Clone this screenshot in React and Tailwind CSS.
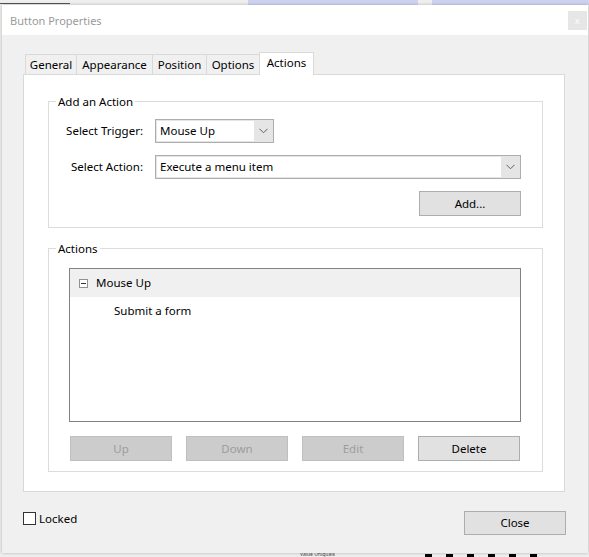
import React from "react";

const font = { fontFamily: '"Noto Sans", "Open Sans", sans-serif' };

function Combo({ width, inner, text }) {
  return (
    <div className={`flex h-[24px] border border-[#adadad] bg-[#e5e5e5] ${width}`}>
      <div className={`my-[1px] ml-[1px] flex items-center bg-white pl-[3px] ${inner}`}>{text}</div>
      <div className="flex flex-1 items-center justify-center">
        <svg width="9" height="6" viewBox="0 0 9 6">
          <path d="M0.5 0.8 L4.5 4.8 L8.5 0.8" fill="none" stroke="#606060" strokeWidth="1" />
        </svg>
      </div>
    </div>
  );
}

function Btn({ children, disabled }) {
  return disabled ? (
    <div className="flex h-[25px] w-[102px] items-center justify-center border border-[#bfbfbf] bg-[#cccccc] text-[#9d9d9d]">
      {children}
    </div>
  ) : (
    <div className="flex h-[25px] w-[102px] items-center justify-center border border-[#adadad] bg-[#e1e1e1] text-black">
      {children}
    </div>
  );
}

export default function App() {
  return (
    <div className="relative h-[557px] w-[589px] overflow-hidden bg-[#eeeeee] text-[11.5px] leading-none text-black" style={font}>
      {/* desktop behind */}
      <div className="absolute left-[248px] top-0 h-[5px] w-[170px] bg-[#cdd2f0]" />
      <div className="absolute left-[432px] top-0 h-[5px] w-[157px] bg-[#cdd2f0]" />
      <div className="absolute left-[0px] top-[3px] h-[1px] w-[70px] bg-[#555]" />
      <div className="absolute left-[300px] top-[552px] text-[5px] leading-none text-[#444]">Value Uniquals</div>
      <div className="absolute left-[425px] top-[554px] flex gap-[14px]">
        <div className="h-[3px] w-[7px] bg-black" />
        <div className="h-[3px] w-[7px] bg-black" />
        <div className="h-[3px] w-[7px] bg-black" />
        <div className="h-[3px] w-[7px] bg-black" />
        <div className="h-[3px] w-[7px] bg-black" />
        <div className="h-[3px] w-[7px] bg-black" />
      </div>

      {/* window */}
      <div className="absolute left-[2px] top-[5px] flex h-[548px] w-[586px] flex-col bg-[#f0f0f0] shadow-[0_0_3px_rgba(0,0,0,0.25)]">
        {/* title bar */}
        <div className="flex h-[30px] items-center justify-between bg-white pl-[8px] pr-[1px]">
          <span className="text-[11px] text-[#9a9a9a]">Button Properties</span>
          <div className="flex h-[19px] w-[19px] items-center justify-center bg-[#e6e6e6] text-[9px] text-white">x</div>
        </div>

        {/* body */}
        <div className="flex flex-1 flex-col">
          {/* tabs */}
          <div className="ml-[23px] mt-[16px] flex h-[23px] items-end">
            <div className="flex h-[20px] w-[51px] items-center justify-center border-l border-t border-[#d9d9d9]">General</div>
            <div className="flex h-[20px] w-[76px] items-center justify-center border-l border-t border-[#d9d9d9]">Appearance</div>
            <div className="flex h-[20px] w-[54px] items-center justify-center border-l border-t border-[#d9d9d9]">Position</div>
            <div className="flex h-[20px] w-[53px] items-center justify-center border-l border-t border-[#d9d9d9]">Options</div>
            <div className="relative z-10 mb-[-1px] flex h-[23px] w-[55px] items-center justify-center border-l border-r border-t border-[#d9d9d9] bg-white pb-[2px]">
              Actions
            </div>
          </div>

          {/* panel */}
          <div className="ml-[21px] flex h-[418px] w-[542px] flex-col border border-[#d9d9d9] bg-white pl-[24px] pr-[21px] pt-[26px]">
            {/* group 1 */}
            <div className="relative flex h-[127px] flex-col border border-[#dcdcdc]">
              <span className="absolute left-[7px] top-[-6px] bg-white px-[2px]">Add an Action</span>
              <div className="mt-[17px] flex items-center">
                <div className="w-[94px] text-right">Select Trigger:</div>
                <div className="ml-[12px]">
                  <Combo width="w-[119px]" inner="w-[97px]" text="Mouse Up" />
                </div>
              </div>
              <div className="mt-[12px] flex items-center">
                <div className="w-[94px] text-right">Select Action:</div>
                <div className="ml-[12px]">
                  <Combo width="w-[366px]" inner="w-[344px]" text="Execute a menu item" />
                </div>
              </div>
              <div className="mt-[12px] flex justify-end pr-[21px]">
                <Btn>Add...</Btn>
              </div>
            </div>

            {/* group 2 */}
            <div className="relative mt-[20px] flex h-[224px] flex-col border border-[#dcdcdc] pl-[20px] pt-[19px]">
              <span className="absolute left-[7px] top-[-6px] bg-white px-[2px]">Actions</span>
              <div className="flex h-[154px] w-[452px] flex-col border border-[#828282]">
                <div className="flex h-[28px] items-center bg-[#f0f0f0] pl-[9px]">
                  <div className="flex h-[9px] w-[9px] items-center justify-center border border-[#919191] bg-white">
                    <div className="h-[1px] w-[5px] bg-[#333]" />
                  </div>
                  <span className="ml-[8px]">Mouse Up</span>
                </div>
                <div className="flex h-[28px] items-center pl-[44px]">Submit a form</div>
              </div>
              <div className="ml-[1px] mt-[14px] flex gap-[14px]">
                <Btn disabled>Up</Btn>
                <Btn disabled>Down</Btn>
                <Btn disabled>Edit</Btn>
                <Btn>Delete</Btn>
              </div>
            </div>
          </div>

          {/* footer */}
          <div className="mt-[19px] flex items-start justify-between pl-[21px] pr-[22px]">
            <div className="mt-[1px] flex items-center">
              <div className="h-[13px] w-[13px] border border-[#333] bg-white" />
              <span className="ml-[3px]">Locked</span>
            </div>
            <div className="flex h-[24px] w-[102px] items-center justify-center border border-[#adadad] bg-[#e1e1e1]">Close</div>
          </div>
        </div>
      </div>
    </div>
  );
}
